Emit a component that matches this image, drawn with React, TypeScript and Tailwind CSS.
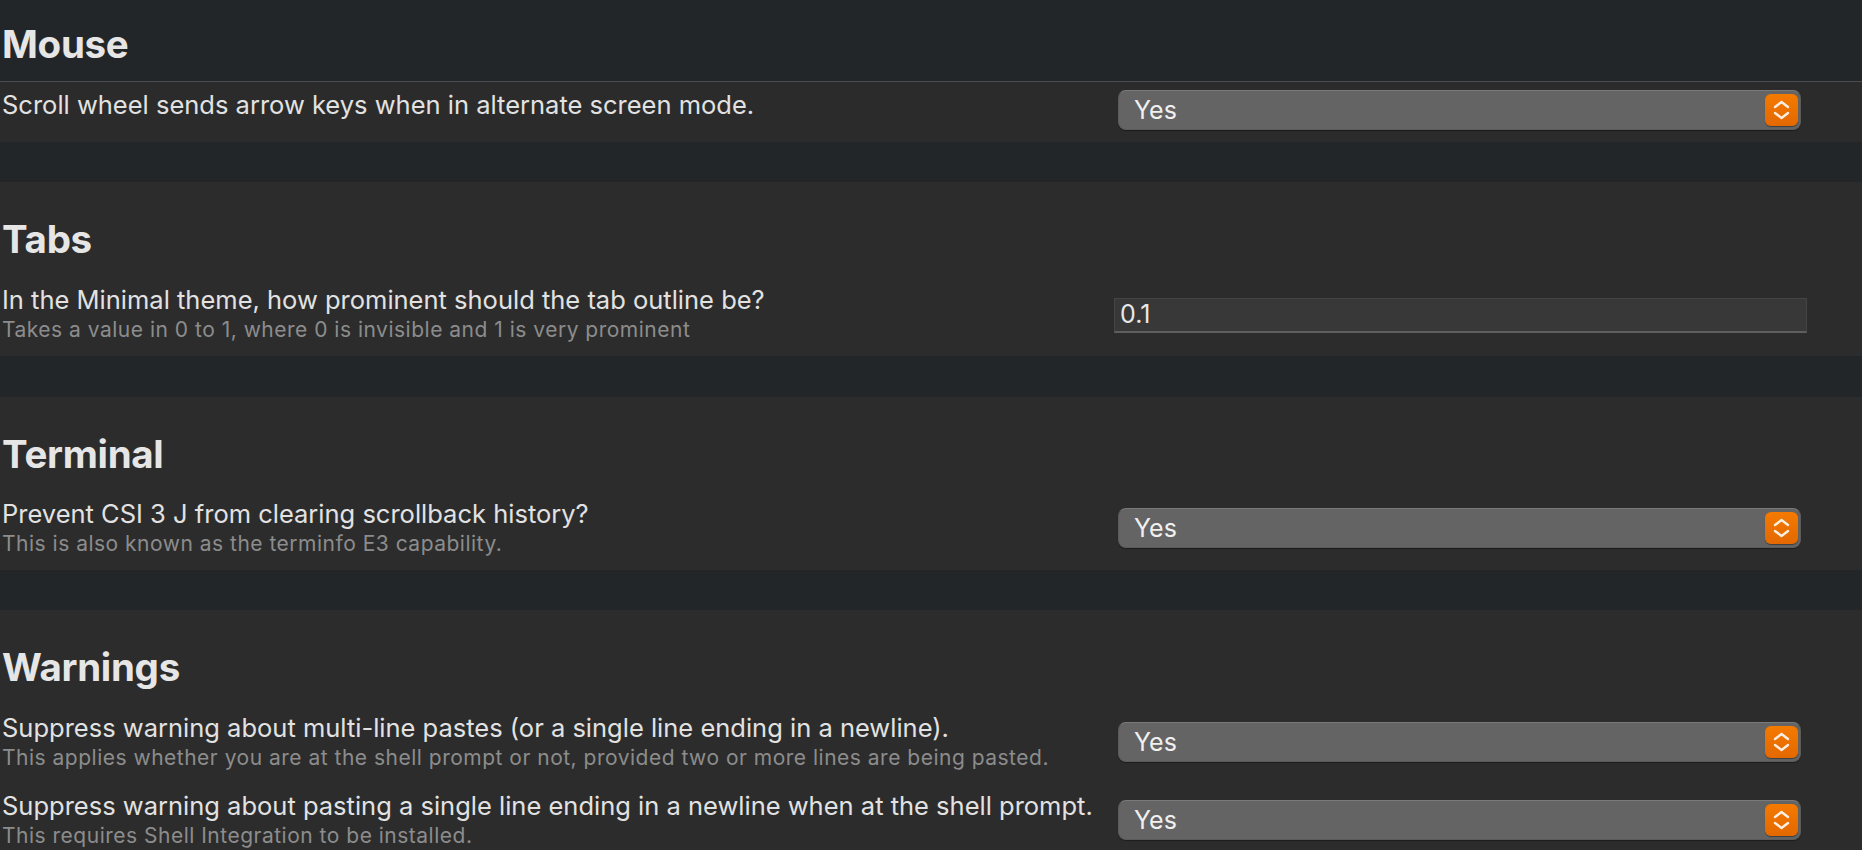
import React from "react";

const Chevrons = () => (
  <svg width="33" height="32" viewBox="0 0 33 32" fill="none">
    <path d="M10 13 L16.5 8 L23 13" stroke="#fdeee2" strokeWidth="2.4" strokeLinecap="round" strokeLinejoin="round" />
    <path d="M10 19 L16.5 24 L23 19" stroke="#fdeee2" strokeWidth="2.4" strokeLinecap="round" strokeLinejoin="round" />
  </svg>
);

const Select = ({ value, className = "" }: { value: string; className?: string }) => (
  <div
    className={
      "relative flex h-[40px] w-[683px] shrink-0 items-center rounded-[8px] border border-[#5b5b5b] border-t-[#7a7a7a] bg-[#646464] shadow-[0_1px_1px_rgba(0,0,0,0.35)] " +
      className
    }
  >
    <span className="pl-[15px] text-[25px] leading-none text-[#f0f0f0]">{value}</span>
    <div className="absolute right-[2px] top-[3px] h-[32px] w-[33px] rounded-[6px] bg-gradient-to-b from-[#f47a00] to-[#e46800] shadow-[0_1px_1px_rgba(0,0,0,0.4)]">
      <Chevrons />
    </div>
  </div>
);

const Row = ({
  title,
  sub,
  control,
}: {
  title: string;
  sub?: string;
  control: React.ReactNode;
}) => (
  <div className="flex items-start justify-between">
    <div className="pl-[2px]">
      <div className="whitespace-nowrap text-[25.5px] leading-[28px] text-[#e2e2e2]">{title}</div>
      {sub && (
        <div className="mt-[3px] whitespace-nowrap text-[21px] leading-[25px] tracking-[0.5px] text-[#8c8c8c]">
          {sub}
        </div>
      )}
    </div>
    {control}
  </div>
);

const Heading = ({ children }: { children: React.ReactNode }) => (
  <h2 className="pl-[2px] text-[38.5px] font-bold leading-[48px] tracking-[-0.3px] text-[#e6e6e6]">{children}</h2>
);

export default function App() {
  return (
    <div className="h-[850px] w-full overflow-hidden bg-[#232629] font-['Inter','Liberation_Sans',sans-serif]">
      {/* Mouse */}
      <div className="h-[82px] border-b border-[#4a4c4e] pt-[20px]">
        <Heading>Mouse</Heading>
      </div>
      <div className="flex h-[60px] items-start justify-between bg-[#2b2b2b] pt-[8px]">
        <div className="mt-[1px] whitespace-nowrap pl-[2px] text-[25.5px] leading-[28px] text-[#e2e2e2]">
          Scroll wheel sends arrow keys when in alternate screen mode.
        </div>
        <Select value="Yes" className="mr-[61px]" />
      </div>

      {/* Tabs */}
      <section className="mt-[40px] bg-[#2c2c2c] pb-[14px] pt-[33px]">
        <Heading>Tabs</Heading>
        <div className="mt-[23px]">
          <Row
            title="In the Minimal theme, how prominent should the tab outline be?"
            sub="Takes a value in 0 to 1, where 0 is invisible and 1 is very prominent"
            control={
              <div className="mr-[55px] mt-[12px] flex h-[35px] w-[693px] shrink-0 items-center border border-[#444444] border-b-2 border-b-[#5e5e5e] bg-[#383838] pl-[5px] text-[25px] text-[#e8e8e8]">
                0.1
              </div>
            }
          />
        </div>
      </section>

      {/* Terminal */}
      <section className="mt-[41px] bg-[#2c2c2c] pb-[14px] pt-[33px]">
        <Heading>Terminal</Heading>
        <div className="mt-[22px]">
          <Row
            title="Prevent CSI 3 J from clearing scrollback history?"
            sub="This is also known as the terminfo E3 capability."
            control={<Select value="Yes" className="mr-[61px] mt-[8px]" />}
          />
        </div>
      </section>

      {/* Warnings */}
      <section className="mt-[40px] bg-[#2c2c2c] pb-[14px] pt-[33px]">
        <Heading>Warnings</Heading>
        <div className="mt-[23px] flex flex-col gap-[22px]">
          <Row
            title="Suppress warning about multi-line pastes (or a single line ending in a newline)."
            sub="This applies whether you are at the shell prompt or not, provided two or more lines are being pasted."
            control={<Select value="Yes" className="mr-[61px] mt-[8px]" />}
          />
          <Row
            title="Suppress warning about pasting a single line ending in a newline when at the shell prompt."
            sub="This requires Shell Integration to be installed."
            control={<Select value="Yes" className="mr-[61px] mt-[8px]" />}
          />
        </div>
      </section>
    </div>
  );
}
